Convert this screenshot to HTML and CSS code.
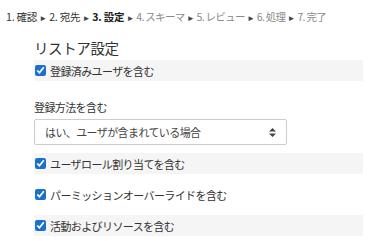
FILE: index.html
```html
<!DOCTYPE html>
<html lang="ja">

<head>
    <meta charset="UTF-8">
    <title>リストア設定</title>
    <link rel="stylesheet" href="styles.css">
</head>

<body>
    <div class="steps">
        <span class="done">1. 確認</span> <span class="sep">►</span>
        <span class="done">2. 宛先</span> <span class="sep">►</span>
        <span class="current">3. 設定</span> <span class="sep">►</span>
        <span class="todo">4. スキーマ</span> <span class="sep">►</span>
        <span class="todo">5. レビュー</span> <span class="sep">►</span>
        <span class="todo">6. 処理</span> <span class="sep">►</span>
        <span class="todo">7. 完了</span>
    </div>
    <div class="settings">
        <h2>リストア設定</h2>
        <label class="row shade"><input type="checkbox" checked> 登録済みユーザを含む</label>
        <div class="field">
            <div class="field-label">登録方法を含む</div>
            <div class="select">
                <span>はい、ユーザが含まれている場合</span>
                <svg width="7" height="9" viewBox="0 0 7 9"><path d="M3.5 0 L7 3.5 H0 Z M0 5.5 H7 L3.5 9 Z" fill="#444"/></svg>
            </div>
        </div>
        <label class="row shade"><input type="checkbox" checked> ユーザロール割り当てを含む</label>
        <label class="row"><input type="checkbox" checked> パーミッションオーバーライドを含む</label>
        <label class="row shade"><input type="checkbox" checked> 活動およびリソースを含む</label>
    </div>
</body>

</html>
```

FILE: styles.css
```css
* {
    margin: 0;
    padding: 0;
    box-sizing: border-box;
}

body {
    font-family: "Noto Sans CJK JP", "Noto Sans", sans-serif;
    color: #333;
    background: #fff;
}

.steps {
    padding: 10px 0 0 6px;
    font-size: 10.5px;
    line-height: 14px;
    white-space: nowrap;
    letter-spacing: -0.2px;
}

.steps .sep {
    color: #444;
    font-size: 8px;
}

.steps .current {
    font-weight: bold;
    color: #222;
}

.steps .todo {
    color: #8a8a8a;
    letter-spacing: -0.7px;
}

.settings {
    padding: 13px 19px 0 34px;
}

.settings h2 {
    font-size: 14.5px;
    font-weight: normal;
    line-height: 20px;
    letter-spacing: -0.4px;
    color: #333;
    margin-bottom: 2px;
}

.row {
    display: flex;
    align-items: center;
    gap: 4px;
    height: 21px;
    padding-left: 1px;
    font-size: 11px;
    letter-spacing: -0.6px;
    margin-bottom: 10px;
}

.row input {
    width: 11px;
    height: 11px;
    margin: 0;
    accent-color: #1a6fd0;
}

.shade {
    background: #f5f5f5;
}

.field {
    padding: 8px 0 8px;
}

.field-label {
    font-size: 11px;
    letter-spacing: -0.6px;
    line-height: 16px;
    margin-bottom: 4px;
}

.select {
    display: flex;
    align-items: center;
    justify-content: space-between;
    width: 253px;
    height: 26px;
    border: 1px solid #ccc;
    border-radius: 2px;
    padding: 0 10px 0 10px;
    font-size: 11px;
    letter-spacing: -0.6px;
    color: #444;
}
```
